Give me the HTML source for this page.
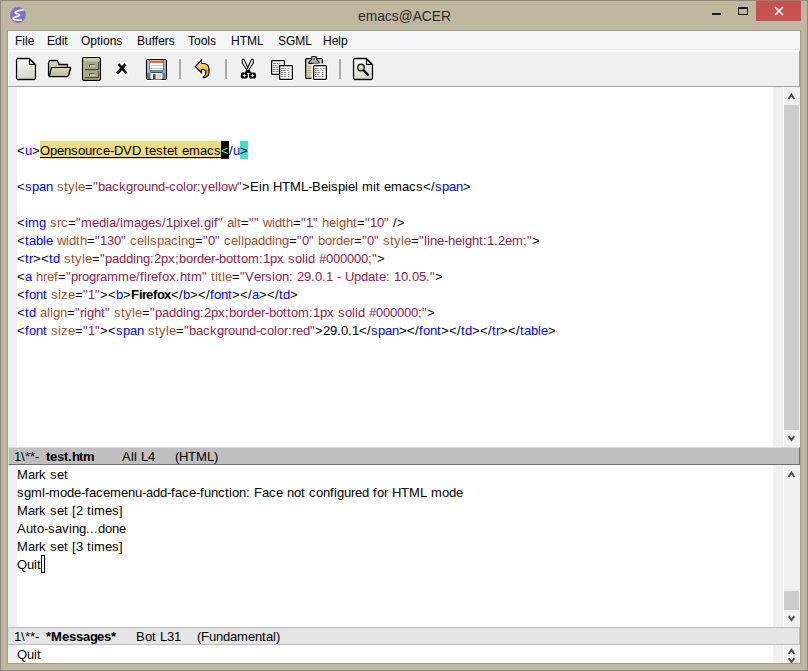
<!DOCTYPE html>
<html><head><meta charset="utf-8">
<style>
*{margin:0;padding:0;box-sizing:border-box}
html,body{width:808px;height:671px;overflow:hidden}
body{position:relative;background:#c0b7a0;font-family:"Liberation Sans",sans-serif;}
.abs{position:absolute}
.L,.M{position:absolute;left:17px;font-size:13px;line-height:18px;white-space:pre;color:#000;padding-top:1px;height:18px}
.M{line-height:18px}
.L i,.M i{display:inline-block;font-style:normal;text-align:left;overflow:visible}
.L b,.M b{font-weight:bold}
.t{color:#0000ff}
.a{color:#a0522d}
.s{color:#8b2252}
.cur{color:#40e0d0}
.mi{position:absolute;top:3px;font-size:12px;color:#000;line-height:15px}
.w3{width:3px}.w4{width:4px}.w5{width:5px}.w7{width:7px}.w8{width:8px}.w9{width:9px}.w10{width:10px}.w11{width:11px}
</style></head><body>
<div class="abs" style="left:0;top:0;width:808px;height:671px;border:1px solid #8e887a"></div>
<div class="abs" style="left:7px;top:30px;width:794px;height:634px;border:1px solid #a49c87"></div>
<!-- title bar -->
<svg class="abs" style="left:10px;top:7px" width="16" height="16" viewBox="0 0 16 16">
<circle cx="8" cy="8" r="7.9" fill="#7e70c4"/>
<path d="M13,2.8 C10,3.2 5.5,4 5.2,5.5 C5,7 10,7 9.8,8.2 C9.6,9.5 3,9.8 3,11.5 C3,13 8,13.2 11.5,13.2" stroke="#fff" stroke-width="1.7" fill="none" stroke-linecap="round" opacity="0.95"/>
</svg>
<div class="abs" style="left:358px;top:6px;width:110px;font-size:15.5px;color:#2b2b2b;line-height:20px;transform:scaleX(0.89);transform-origin:0 0;white-space:nowrap">emacs@ACER</div>
<div class="abs" style="left:712px;top:13px;width:9px;height:2px;background:#1e1e1e"></div>
<div class="abs" style="left:738px;top:7px;width:10px;height:8px;border:1px solid #1e1e1e;border-top-width:2px"></div>
<div class="abs" style="left:756px;top:1px;width:45px;height:20px;background:#c75050"></div>
<svg class="abs" style="left:773px;top:6px" width="12" height="10" viewBox="0 0 12 10"><path d="M2 1 L10 9 M10 1 L2 9" stroke="#fff" stroke-width="1.7"/></svg>

<!-- menu -->
<div class="abs" style="left:8px;top:31px;width:792px;height:18px;background:#f5f6f7">
<span class="mi" style="left:7px">File</span>
<span class="mi" style="left:39px">Edit</span>
<span class="mi" style="left:73px">Options</span>
<span class="mi" style="left:129px">Buffers</span>
<span class="mi" style="left:180px">Tools</span>
<span class="mi" style="left:223px">HTML</span>
<span class="mi" style="left:270px">SGML</span>
<span class="mi" style="left:315px">Help</span>
</div>
<div class="abs" style="left:8px;top:49px;width:792px;height:1px;background:#e6e7e9"></div>
<div class="abs" style="left:8px;top:50px;width:792px;height:36px;background:#f0f0f0;border-top:2px solid #fff;border-left:1px solid #fff;border-right:1px solid #a0a0a0"></div>
<div class="abs" style="left:8px;top:86px;width:792px;height:1px;background:#a0a0a0"></div>
<svg class="abs" style="left:0;top:0" width="400" height="88" viewBox="0 0 400 88">
<defs>
<linearGradient id="gdoc" x1="0" y1="0" x2="0.3" y2="1"><stop offset="0" stop-color="#ffffff"/><stop offset="1" stop-color="#d6d6d0"/></linearGradient>
<linearGradient id="gfold" x1="0" y1="0" x2="1" y2="1"><stop offset="0" stop-color="#c8c8c8"/><stop offset="1" stop-color="#ffffff"/></linearGradient>
<linearGradient id="gflap" x1="0" y1="0" x2="0" y2="1"><stop offset="0" stop-color="#dadac0"/><stop offset="1" stop-color="#babA94"/></linearGradient>
<linearGradient id="gfol" x1="0" y1="0" x2="0" y2="1"><stop offset="0" stop-color="#dedec4"/><stop offset="1" stop-color="#a8a884"/></linearGradient>
<linearGradient id="gund" x1="0" y1="0" x2="0" y2="1"><stop offset="0" stop-color="#fdf0b0"/><stop offset="0.45" stop-color="#f0c850"/><stop offset="0.6" stop-color="#d8a020"/><stop offset="1" stop-color="#f4d060"/></linearGradient>
<linearGradient id="gclip" x1="0" y1="0" x2="0" y2="1"><stop offset="0" stop-color="#e8e8e0"/><stop offset="1" stop-color="#909890"/></linearGradient>
<radialGradient id="glens" cx="0.4" cy="0.4" r="0.6"><stop offset="0" stop-color="#f4f4e8"/><stop offset="1" stop-color="#b8b8a0"/></radialGradient>
</defs>
<!-- separators -->
<rect x="179" y="59" width="2" height="20" fill="#a9a9a9"/>
<rect x="225" y="59" width="2" height="20" fill="#a9a9a9"/>
<rect x="339" y="59" width="2" height="20" fill="#a9a9a9"/>

<!-- new document -->
<g id="doc">
<path d="M16.5,59.5 L17.5,58.5 L29.5,58.5 L35.5,64.5 L35.5,78.5 L34.5,79.5 L17.5,79.5 L16.5,78.5 Z" fill="url(#gdoc)" stroke="#fff" stroke-width="3" stroke-linejoin="round"/>
<path d="M16.5,59.5 L17.5,58.5 L29.5,58.5 L35.5,64.5 L35.5,78.5 L34.5,79.5 L17.5,79.5 L16.5,78.5 Z" fill="url(#gdoc)" stroke="#000" stroke-width="1.3"/>
<path d="M29.5,59 L29.5,64.5 L35,64.5 Z" fill="url(#gfold)" stroke="#000" stroke-width="1.1"/>
</g>

<!-- folder -->
<path d="M48.5,63 L49.5,61 L50.5,60.5 L57,60.5 L58.5,63 L59,64.5 L67.5,64.5 L67.5,67.5 L70.5,67.5 L70.5,69 L68.5,75.5 L67.5,76.5 L49.5,76.5 L48.5,75.5 Z" fill="url(#gfol)" stroke="#fff" stroke-width="3" stroke-linejoin="round"/>
<path d="M48.5,63 L49.5,61 L50.5,60.5 L57,60.5 L58.5,63 L59,64.5 L67.5,64.5 L67.5,67.5 L70.5,67.5 L70.5,69 L68.5,75.5 L67.5,76.5 L49.5,76.5 L48.5,75.5 Z" fill="url(#gfol)" stroke="#000" stroke-width="1.3"/>
<path d="M51.5,67.5 L70.5,67.5 L68.5,75.5 L67.5,76.5 L49.5,76.5 L50.5,71 Z" fill="url(#gflap)" stroke="#000" stroke-width="1.2"/>

<!-- cabinet -->
<path d="M82.5,58 L83.5,57.5 L99.5,57.5 L100.5,58.5 L100.5,79.5 L99.5,80.5 L83.5,80.5 L82.5,79.5 Z" fill="#c2c29e" stroke="#fff" stroke-width="3"/>
<path d="M82.5,58 L83.5,57.5 L99.5,57.5 L100.5,58.5 L100.5,79.5 L99.5,80.5 L83.5,80.5 L82.5,79.5 Z" fill="#b4b490" stroke="#000" stroke-width="1.2"/>
<rect x="84" y="58" width="15" height="3" fill="#cacaa6"/>
<rect x="85" y="62" width="14" height="7" fill="#a8a884"/>
<rect x="85" y="69" width="14" height="1.3" fill="#3e4c4c"/>
<rect x="98" y="62" width="1.2" height="7" fill="#3e4c4c"/>
<rect x="89" y="64" width="6" height="3" fill="#c8c8a8"/><path d="M89.5,67 L89.5,64.5 L94.5,64.5" fill="none" stroke="#50584c" stroke-width="1"/>
<rect x="85" y="71" width="14" height="6" fill="#a8a884"/>
<rect x="85" y="77" width="14" height="1.3" fill="#505848"/>
<rect x="98" y="71" width="1.2" height="6" fill="#704838"/>
<rect x="89" y="73" width="6" height="3" fill="#c8c8a8"/><path d="M89.5,76 L89.5,73.5 L94.5,73.5" fill="none" stroke="#50584c" stroke-width="1"/><rect x="84" y="78" width="15" height="2" fill="#8e8e70"/>

<!-- X -->
<path d="M118.5,64 L126.5,73.5" stroke="#fff" stroke-width="4.5" stroke-linecap="round"/>
<path d="M125.5,64 L117,73.5" stroke="#fff" stroke-width="5" stroke-linecap="round"/>
<path d="M118.5,64 L126.5,73.5" stroke="#000" stroke-width="2.6"/>
<path d="M125.5,64.2 L117,73.5" stroke="#000" stroke-width="3"/>

<!-- floppy -->
<path d="M146.5,60 L147.5,59.5 L165.5,59.5 L166.5,60.5 L166.5,78.5 L165.5,79.5 L147.5,79.5 L146.5,78.5 Z" fill="#7f9fb8" stroke="#fff" stroke-width="3"/>
<path d="M146.5,60 L147.5,59.5 L165.5,59.5 L166.5,60.5 L166.5,78.5 L165.5,79.5 L147.5,79.5 L146.5,78.5 Z" fill="#7898aa" stroke="#000" stroke-width="1.2"/>
<rect x="147" y="60" width="2" height="19" fill="#a4c0d4"/>
<rect x="164" y="60" width="1.5" height="19" fill="#9cb8cc"/>
<rect x="147" y="73" width="3.5" height="6" fill="#5a74a8"/>
<rect x="161.5" y="73" width="3.5" height="6" fill="#5a74a8"/>
<rect x="150" y="60" width="14" height="11" fill="#6a7a80"/>
<rect x="150" y="60" width="13" height="10" fill="#ffffff"/>
<rect x="150" y="60" width="13" height="1" fill="#f0c070"/>
<rect x="150" y="61" width="13" height="2" fill="#e06048"/>
<rect x="150" y="65" width="13" height="1" fill="#c8c8c8"/>
<rect x="150" y="68" width="13" height="1" fill="#c8c8c8"/>
<rect x="150.5" y="72" width="12" height="7.5" rx="1.5" fill="#f2f2ea"/>
<rect x="151" y="72" width="11" height="1" fill="#3c4850"/>
<rect x="153" y="74" width="2.5" height="5" fill="#3e4a40"/>
<rect x="157" y="74" width="4" height="5" fill="#d4d4cc"/>

<!-- undo -->
<path d="M195.3,66.5 L201.5,60.2 L201.5,63.5 L204,63.5 C207,64 209,66.5 209,69.5 L209,72.5 C209,75 207,77 203.8,77.8 L203.2,77 C205.2,75.5 205.8,74 205.8,72.5 C205.8,70.5 204.3,69.5 202.5,69.5 L201.5,69.5 L201.5,72.8 Z" fill="url(#gund)" stroke="#fff" stroke-width="3" stroke-linejoin="round"/>
<path d="M195.3,66.5 L201.5,60.2 L201.5,63.5 L204,63.5 C207,64 209,66.5 209,69.5 L209,72.5 C209,75 207,77 203.8,77.8 L203.2,77 C205.2,75.5 205.8,74 205.8,72.5 C205.8,70.5 204.3,69.5 202.5,69.5 L201.5,69.5 L201.5,72.8 Z" fill="url(#gund)" stroke="#000" stroke-width="1.2" stroke-linejoin="miter"/>

<!-- scissors -->
<g stroke-linejoin="round">
<path d="M242.8,59 L244,59.3 L249,70.5 L247.5,71.2 L242.2,63 L242.3,60 Z" fill="#fff" stroke="#fff" stroke-width="3"/>
<path d="M252.7,59 L251.5,59.3 L246.5,70.5 L248,71.2 L253.3,63 L253.2,60 Z" fill="#fff" stroke="#fff" stroke-width="3"/>
<circle cx="244.3" cy="75.5" r="3.4" fill="#fff" stroke="#fff" stroke-width="2.5"/>
<circle cx="252.6" cy="75.5" r="3.4" fill="#fff" stroke="#fff" stroke-width="2.5"/>
<path d="M242.8,59 L244,59.3 L249,70.5 L247.5,71.2 L242.2,63 L242.3,60 Z" fill="#fff" stroke="#000" stroke-width="1.1"/>
<path d="M252.7,59 L251.5,59.3 L246.5,70.5 L248,71.2 L253.3,63 L253.2,60 Z" fill="#fff" stroke="#000" stroke-width="1.1"/>
<path d="M246,70 L250,70 L251,73 L245,73 Z" fill="#000"/>
<path d="M242,72.5 L246.5,72.5 L247.8,74 L247.8,77.2 L246.5,78.6 L242,78.6 L240.8,77.2 L240.8,74 Z" fill="#000"/><path d="M244.3,73.6 L244.9,75 L246.3,75.6 L244.9,76.2 L244.3,77.6 L243.7,76.2 L242.3,75.6 L243.7,75 Z" fill="#fff"/>
<path d="M250.3,72.5 L254.8,72.5 L256.1,74 L256.1,77.2 L254.8,78.6 L250.3,78.6 L249,77.2 L249,74 Z" fill="#000"/><path d="M252.6,73.6 L253.2,75 L254.6,75.6 L253.2,76.2 L252.6,77.6 L252,76.2 L250.6,75.6 L252,75 Z" fill="#fff"/>
<path d="M244.3,73.8 L244.7,75.1 L246,75.5 L244.7,75.9 L244.3,77.2 L243.9,75.9 L242.6,75.5 L243.9,75.1 Z" fill="#000" opacity="0.0"/>
</g>

<!-- copy -->
<rect x="271.5" y="60.5" width="13" height="14" fill="#fff" stroke="#fff" stroke-width="3"/>
<rect x="279.5" y="65.5" width="13" height="14" fill="#fff" stroke="#fff" stroke-width="3"/>
<rect x="271.6" y="60.6" width="12.8" height="13.8" rx="0.6" fill="#fff" stroke="#000" stroke-width="1.3"/>
<g fill="#8a8a86"><rect x="273" y="63" width="3.5" height="1"/><rect x="277" y="63" width="1.5" height="1"/><rect x="279" y="63" width="1.5" height="1"/>
<rect x="273" y="65" width="1.5" height="1"/><rect x="275" y="65" width="2.5" height="1"/>
<rect x="273" y="67" width="2.5" height="1"/><rect x="276" y="67" width="2.5" height="1"/>
<rect x="273" y="69" width="2.5" height="1"/><rect x="276" y="69" width="2.5" height="1"/>
<rect x="273" y="71" width="2.5" height="1"/><rect x="276" y="71" width="2.5" height="1"/></g>
<rect x="279.6" y="65.6" width="12.8" height="13.8" rx="0.6" fill="#fff" stroke="#000" stroke-width="1.3"/>
<g fill="#8a8a86"><rect x="281" y="68" width="3.5" height="1"/><rect x="285" y="68" width="1.5" height="1"/><rect x="288" y="68" width="1.5" height="1"/>
<rect x="281" y="70" width="1.5" height="1"/><rect x="283" y="70" width="2.5" height="1"/><rect x="287" y="70" width="1.5" height="1"/>
<rect x="281" y="72" width="2.5" height="1"/><rect x="284" y="72" width="2.5" height="1"/><rect x="288" y="72" width="1.5" height="1"/>
<rect x="281" y="74" width="2.5" height="1"/><rect x="284" y="74" width="2.5" height="1"/><rect x="288" y="74" width="1.5" height="1"/>
<rect x="281" y="76" width="2.5" height="1"/><rect x="284" y="76" width="2.5" height="1"/><rect x="288" y="76" width="1.5" height="1"/></g>

<!-- paste -->
<rect x="305.5" y="58.5" width="17" height="20" rx="1" fill="#fff" stroke="#fff" stroke-width="3"/>
<rect x="305.6" y="58.6" width="16.8" height="19.8" rx="1" fill="#d8d6b4" stroke="#000" stroke-width="1.3"/>
<rect x="321" y="59" width="1" height="19" fill="#c87838"/>
<g fill="#b8b08e"><rect x="307" y="66" width="14" height="1"/><rect x="307" y="68" width="14" height="1"/><rect x="307" y="70" width="14" height="1"/><rect x="307" y="72" width="14" height="1"/><rect x="307" y="74" width="14" height="1"/><rect x="307" y="76" width="14" height="1"/></g>
<path d="M312,56.5 L316,56.5 L316.5,59.5 L319,62 L319,63.5 L309,63.5 L309,62 L311.5,59.5 Z" fill="url(#gclip)" stroke="#000" stroke-width="1.1" stroke-linejoin="round"/><rect x="313" y="58" width="2" height="2" fill="#606860"/>
<rect x="313" y="65" width="14" height="15" rx="1" fill="#fff" stroke="#fff" stroke-width="3"/>
<rect x="313.6" y="65.6" width="12.8" height="13.8" rx="1" fill="#fff" stroke="#000" stroke-width="1.3"/>
<g fill="#8a8a86"><rect x="315" y="68" width="3.5" height="1"/><rect x="320" y="68" width="1.5" height="1"/><rect x="323" y="68" width="1.5" height="1"/>
<rect x="315" y="70" width="1.5" height="1"/><rect x="317" y="70" width="2.5" height="1"/><rect x="322" y="70" width="1.5" height="1"/>
<rect x="315" y="72" width="2.5" height="1"/><rect x="318" y="72" width="2.5" height="1"/><rect x="322" y="72" width="1.5" height="1"/>
<rect x="315" y="74" width="1.5" height="1"/><rect x="317" y="74" width="2.5" height="1"/><rect x="322" y="74" width="1.5" height="1"/>
<rect x="315" y="76" width="2.5" height="1"/><rect x="318" y="76" width="2.5" height="1"/><rect x="322" y="76" width="1.5" height="1"/></g>

<!-- search document -->
<g transform="translate(337,0)">
<path d="M16.5,59.5 L17.5,58.5 L29.5,58.5 L35.5,64.5 L35.5,78.5 L34.5,79.5 L17.5,79.5 L16.5,78.5 Z" fill="url(#gdoc)" stroke="#fff" stroke-width="3" stroke-linejoin="round"/>
<path d="M16.5,59.5 L17.5,58.5 L29.5,58.5 L35.5,64.5 L35.5,78.5 L34.5,79.5 L17.5,79.5 L16.5,78.5 Z" fill="url(#gdoc)" stroke="#000" stroke-width="1.3"/>
<path d="M29.5,59 L29.5,64.5 L35,64.5 Z" fill="url(#gfold)" stroke="#000" stroke-width="1.1"/>
</g>
<circle cx="361" cy="67.5" r="3.3" fill="url(#glens)" stroke="#1c2420" stroke-width="1.4"/>
<path d="M363.8,70.5 L368,74.8" stroke="#000" stroke-width="2.2" stroke-linecap="round"/>
</svg>


<!-- editor window -->
<div class="abs" style="left:8px;top:87px;width:792px;height:360px;background:#fff"></div>
<div class="abs" style="left:8px;top:87px;width:9px;height:360px;background:#f0f0f0"></div>
<div class="abs" style="left:773px;top:87px;width:10px;height:360px;background:#f0f0f0"></div>
<div class="abs" style="left:784px;top:87px;width:16px;height:360px;background:#f0f0f0"></div>
<div class="abs" style="left:784px;top:105px;width:15px;height:325px;background:#cdcdcd"></div>
<!-- mode line 1 -->
<div class="abs" style="left:8px;top:447px;width:792px;height:18px;background:#bfbfbf;border-top:1px solid #dadada;border-left:1px solid #dcdcdc;border-bottom:1px solid #6f6f6f;border-right:1px solid #6f6f6f"></div>
<!-- messages window -->
<div class="abs" style="left:8px;top:465px;width:792px;height:162px;background:#fff"></div>
<div class="abs" style="left:8px;top:465px;width:9px;height:162px;background:#f0f0f0"></div>
<div class="abs" style="left:773px;top:465px;width:10px;height:162px;background:#f0f0f0"></div>
<div class="abs" style="left:784px;top:465px;width:16px;height:162px;background:#f0f0f0"></div>
<div class="abs" style="left:784px;top:591px;width:15px;height:19px;background:#cdcdcd"></div>
<!-- mode line 2 -->
<div class="abs" style="left:8px;top:627px;width:792px;height:18px;background:#e5e5e5;border:1px solid #bdbdbd;border-left-color:#dcdcdc"></div>
<!-- echo -->
<div class="abs" style="left:8px;top:645px;width:792px;height:18px;background:#fff"></div>
<div class="abs" style="left:8px;top:645px;width:9px;height:18px;background:#f0f0f0"></div>
<div class="abs" style="left:773px;top:645px;width:10px;height:18px;background:#f0f0f0"></div>
<div class="abs" style="left:784px;top:645px;width:16px;height:18px;background:#f0f0f0"></div>
<svg class="abs" style="left:784px;top:87px" width="16" height="576" viewBox="784 87 16 576">
<g fill="none" stroke="#505050" stroke-width="2">
<path d="M788.7,99 L791.5,94.6 L794.3,99"/>
<path d="M788.7,436.2 L791.5,440 L794.3,436.2"/>
<path d="M788.7,477 L791.5,472.6 L794.3,477"/>
<path d="M788.7,616.2 L791.5,620 L794.3,616.2"/>
<path d="M788.7,654 L791.5,649.8 L794.3,654"/>
<path d="M788.7,658.2 L791.5,662 L794.3,658.2"/>
</g>
</svg>

<div class="abs" style="left:40px;top:141px;width:181px;height:18px;background:#eedc82"></div><div class="abs" style="left:221px;top:141px;width:8px;height:18px;background:#000"></div><div class="abs" style="left:240px;top:141px;width:8px;height:18px;background:#40e0d0"></div><div class="abs" style="left:40px;top:157px;width:181px;height:1px;background:#000"></div><div class="L" style="top:141px"><i class="w8">&lt;</i><span class="t"><i class="w7">u</i></span><i class="w8">&gt;</i><i class="w10">O</i><i class="w7">p</i><i class="w7">e</i><i class="w7">n</i><i class="w7">s</i><i class="w7">o</i><i class="w7">u</i><i class="w4">r</i><i class="w7">c</i><i class="w7">e</i><i class="w4">-</i><i class="w9">D</i><i class="w9">V</i><i class="w9">D</i><i class="w4"> </i><i class="w4">t</i><i class="w7">e</i><i class="w7">s</i><i class="w4">t</i><i class="w7">e</i><i class="w4">t</i><i class="w4"> </i><i class="w7">e</i><i class="w11">m</i><i class="w7">a</i><i class="w7">c</i><i class="w7">s</i><span class="cur"><i class="w8">&lt;</i></span><i class="w4">/</i><span class="t"><i class="w7">u</i></span><i class="w8">&gt;</i></div>
<div class="L" style="top:177px"><i class="w8">&lt;</i><span class="t"><i class="w7">s</i><i class="w7">p</i><i class="w7">a</i><i class="w7">n</i></span><i class="w4"> </i><span class="a"><i class="w7">s</i><i class="w4">t</i><i class="w7">y</i><i class="w3">l</i><i class="w7">e</i></span><i class="w8">=</i><span class="s"><i class="w5">"</i><i class="w7">b</i><i class="w7">a</i><i class="w7">c</i><i class="w7">k</i><i class="w7">g</i><i class="w4">r</i><i class="w7">o</i><i class="w7">u</i><i class="w7">n</i><i class="w7">d</i><i class="w4">-</i><i class="w7">c</i><i class="w7">o</i><i class="w3">l</i><i class="w7">o</i><i class="w4">r</i><i class="w4">:</i><i class="w7">y</i><i class="w7">e</i><i class="w3">l</i><i class="w3">l</i><i class="w7">o</i><i class="w9">w</i><i class="w5">"</i></span><i class="w8">&gt;</i><i class="w9">E</i><i class="w3">i</i><i class="w7">n</i><i class="w4"> </i><i class="w9">H</i><i class="w8">T</i><i class="w11">M</i><i class="w7">L</i><i class="w4">-</i><i class="w9">B</i><i class="w7">e</i><i class="w3">i</i><i class="w7">s</i><i class="w7">p</i><i class="w3">i</i><i class="w7">e</i><i class="w3">l</i><i class="w4"> </i><i class="w11">m</i><i class="w3">i</i><i class="w4">t</i><i class="w4"> </i><i class="w7">e</i><i class="w11">m</i><i class="w7">a</i><i class="w7">c</i><i class="w7">s</i><i class="w8">&lt;</i><i class="w4">/</i><span class="t"><i class="w7">s</i><i class="w7">p</i><i class="w7">a</i><i class="w7">n</i></span><i class="w8">&gt;</i></div>
<div class="L" style="top:213px"><i class="w8">&lt;</i><span class="t"><i class="w3">i</i><i class="w11">m</i><i class="w7">g</i></span><i class="w4"> </i><span class="a"><i class="w7">s</i><i class="w4">r</i><i class="w7">c</i></span><i class="w8">=</i><span class="s"><i class="w5">"</i><i class="w11">m</i><i class="w7">e</i><i class="w7">d</i><i class="w3">i</i><i class="w7">a</i><i class="w4">/</i><i class="w3">i</i><i class="w11">m</i><i class="w7">a</i><i class="w7">g</i><i class="w7">e</i><i class="w7">s</i><i class="w4">/</i><i class="w7">1</i><i class="w7">p</i><i class="w3">i</i><i class="w7">x</i><i class="w7">e</i><i class="w3">l</i><i class="w4">.</i><i class="w7">g</i><i class="w3">i</i><i class="w4">f</i><i class="w5">"</i></span><i class="w4"> </i><span class="a"><i class="w7">a</i><i class="w3">l</i><i class="w4">t</i></span><i class="w8">=</i><span class="s"><i class="w5">"</i><i class="w5">"</i></span><i class="w4"> </i><span class="a"><i class="w9">w</i><i class="w3">i</i><i class="w7">d</i><i class="w4">t</i><i class="w7">h</i></span><i class="w8">=</i><span class="s"><i class="w5">"</i><i class="w7">1</i><i class="w5">"</i></span><i class="w4"> </i><span class="a"><i class="w7">h</i><i class="w7">e</i><i class="w3">i</i><i class="w7">g</i><i class="w7">h</i><i class="w4">t</i></span><i class="w8">=</i><span class="s"><i class="w5">"</i><i class="w7">1</i><i class="w7">0</i><i class="w5">"</i></span><i class="w4"> </i><i class="w4">/</i><i class="w8">&gt;</i></div>
<div class="L" style="top:231px"><i class="w8">&lt;</i><span class="t"><i class="w4">t</i><i class="w7">a</i><i class="w7">b</i><i class="w3">l</i><i class="w7">e</i></span><i class="w4"> </i><span class="a"><i class="w9">w</i><i class="w3">i</i><i class="w7">d</i><i class="w4">t</i><i class="w7">h</i></span><i class="w8">=</i><span class="s"><i class="w5">"</i><i class="w7">1</i><i class="w7">3</i><i class="w7">0</i><i class="w5">"</i></span><i class="w4"> </i><span class="a"><i class="w7">c</i><i class="w7">e</i><i class="w3">l</i><i class="w3">l</i><i class="w7">s</i><i class="w7">p</i><i class="w7">a</i><i class="w7">c</i><i class="w3">i</i><i class="w7">n</i><i class="w7">g</i></span><i class="w8">=</i><span class="s"><i class="w5">"</i><i class="w7">0</i><i class="w5">"</i></span><i class="w4"> </i><span class="a"><i class="w7">c</i><i class="w7">e</i><i class="w3">l</i><i class="w3">l</i><i class="w7">p</i><i class="w7">a</i><i class="w7">d</i><i class="w7">d</i><i class="w3">i</i><i class="w7">n</i><i class="w7">g</i></span><i class="w8">=</i><span class="s"><i class="w5">"</i><i class="w7">0</i><i class="w5">"</i></span><i class="w4"> </i><span class="a"><i class="w7">b</i><i class="w7">o</i><i class="w4">r</i><i class="w7">d</i><i class="w7">e</i><i class="w4">r</i></span><i class="w8">=</i><span class="s"><i class="w5">"</i><i class="w7">0</i><i class="w5">"</i></span><i class="w4"> </i><span class="a"><i class="w7">s</i><i class="w4">t</i><i class="w7">y</i><i class="w3">l</i><i class="w7">e</i></span><i class="w8">=</i><span class="s"><i class="w5">"</i><i class="w3">l</i><i class="w3">i</i><i class="w7">n</i><i class="w7">e</i><i class="w4">-</i><i class="w7">h</i><i class="w7">e</i><i class="w3">i</i><i class="w7">g</i><i class="w7">h</i><i class="w4">t</i><i class="w4">:</i><i class="w7">1</i><i class="w4">.</i><i class="w7">2</i><i class="w7">e</i><i class="w11">m</i><i class="w4">;</i><i class="w5">"</i></span><i class="w8">&gt;</i></div>
<div class="L" style="top:249px"><i class="w8">&lt;</i><span class="t"><i class="w4">t</i><i class="w4">r</i></span><i class="w8">&gt;</i><i class="w8">&lt;</i><span class="t"><i class="w4">t</i><i class="w7">d</i></span><i class="w4"> </i><span class="a"><i class="w7">s</i><i class="w4">t</i><i class="w7">y</i><i class="w3">l</i><i class="w7">e</i></span><i class="w8">=</i><span class="s"><i class="w5">"</i><i class="w7">p</i><i class="w7">a</i><i class="w7">d</i><i class="w7">d</i><i class="w3">i</i><i class="w7">n</i><i class="w7">g</i><i class="w4">:</i><i class="w7">2</i><i class="w7">p</i><i class="w7">x</i><i class="w4">;</i><i class="w7">b</i><i class="w7">o</i><i class="w4">r</i><i class="w7">d</i><i class="w7">e</i><i class="w4">r</i><i class="w4">-</i><i class="w7">b</i><i class="w7">o</i><i class="w4">t</i><i class="w4">t</i><i class="w7">o</i><i class="w11">m</i><i class="w4">:</i><i class="w7">1</i><i class="w7">p</i><i class="w7">x</i><i class="w4"> </i><i class="w7">s</i><i class="w7">o</i><i class="w3">l</i><i class="w3">i</i><i class="w7">d</i><i class="w4"> </i><i class="w7">#</i><i class="w7">0</i><i class="w7">0</i><i class="w7">0</i><i class="w7">0</i><i class="w7">0</i><i class="w7">0</i><i class="w4">;</i><i class="w5">"</i></span><i class="w8">&gt;</i></div>
<div class="L" style="top:267px"><i class="w8">&lt;</i><span class="t"><i class="w7">a</i></span><i class="w4"> </i><span class="a"><i class="w7">h</i><i class="w4">r</i><i class="w7">e</i><i class="w4">f</i></span><i class="w8">=</i><span class="s"><i class="w5">"</i><i class="w7">p</i><i class="w4">r</i><i class="w7">o</i><i class="w7">g</i><i class="w4">r</i><i class="w7">a</i><i class="w11">m</i><i class="w11">m</i><i class="w7">e</i><i class="w4">/</i><i class="w4">f</i><i class="w3">i</i><i class="w4">r</i><i class="w7">e</i><i class="w4">f</i><i class="w7">o</i><i class="w7">x</i><i class="w4">.</i><i class="w7">h</i><i class="w4">t</i><i class="w11">m</i><i class="w5">"</i></span><i class="w4"> </i><span class="a"><i class="w4">t</i><i class="w3">i</i><i class="w4">t</i><i class="w3">l</i><i class="w7">e</i></span><i class="w8">=</i><span class="s"><i class="w5">"</i><i class="w9">V</i><i class="w7">e</i><i class="w4">r</i><i class="w7">s</i><i class="w3">i</i><i class="w7">o</i><i class="w7">n</i><i class="w4">:</i><i class="w4"> </i><i class="w7">2</i><i class="w7">9</i><i class="w4">.</i><i class="w7">0</i><i class="w4">.</i><i class="w7">1</i><i class="w4"> </i><i class="w4">-</i><i class="w4"> </i><i class="w9">U</i><i class="w7">p</i><i class="w7">d</i><i class="w7">a</i><i class="w4">t</i><i class="w7">e</i><i class="w4">:</i><i class="w4"> </i><i class="w7">1</i><i class="w7">0</i><i class="w4">.</i><i class="w7">0</i><i class="w7">5</i><i class="w4">.</i><i class="w5">"</i></span><i class="w8">&gt;</i></div>
<div class="L" style="top:285px"><i class="w8">&lt;</i><span class="t"><i class="w4">f</i><i class="w7">o</i><i class="w7">n</i><i class="w4">t</i></span><i class="w4"> </i><span class="a"><i class="w7">s</i><i class="w3">i</i><i class="w7">z</i><i class="w7">e</i></span><i class="w8">=</i><span class="s"><i class="w5">"</i><i class="w7">1</i><i class="w5">"</i></span><i class="w8">&gt;</i><i class="w8">&lt;</i><span class="t"><i class="w7">b</i></span><i class="w8">&gt;</i><b><i class="w8">F</i><i class="w3">i</i><i class="w4">r</i><i class="w7">e</i><i class="w4">f</i><i class="w7">o</i><i class="w7">x</i></b><i class="w8">&lt;</i><i class="w4">/</i><span class="t"><i class="w7">b</i></span><i class="w8">&gt;</i><i class="w8">&lt;</i><i class="w4">/</i><span class="t"><i class="w4">f</i><i class="w7">o</i><i class="w7">n</i><i class="w4">t</i></span><i class="w8">&gt;</i><i class="w8">&lt;</i><i class="w4">/</i><span class="t"><i class="w7">a</i></span><i class="w8">&gt;</i><i class="w8">&lt;</i><i class="w4">/</i><span class="t"><i class="w4">t</i><i class="w7">d</i></span><i class="w8">&gt;</i></div>
<div class="L" style="top:303px"><i class="w8">&lt;</i><span class="t"><i class="w4">t</i><i class="w7">d</i></span><i class="w4"> </i><span class="a"><i class="w7">a</i><i class="w3">l</i><i class="w3">i</i><i class="w7">g</i><i class="w7">n</i></span><i class="w8">=</i><span class="s"><i class="w5">"</i><i class="w4">r</i><i class="w3">i</i><i class="w7">g</i><i class="w7">h</i><i class="w4">t</i><i class="w5">"</i></span><i class="w4"> </i><span class="a"><i class="w7">s</i><i class="w4">t</i><i class="w7">y</i><i class="w3">l</i><i class="w7">e</i></span><i class="w8">=</i><span class="s"><i class="w5">"</i><i class="w7">p</i><i class="w7">a</i><i class="w7">d</i><i class="w7">d</i><i class="w3">i</i><i class="w7">n</i><i class="w7">g</i><i class="w4">:</i><i class="w7">2</i><i class="w7">p</i><i class="w7">x</i><i class="w4">;</i><i class="w7">b</i><i class="w7">o</i><i class="w4">r</i><i class="w7">d</i><i class="w7">e</i><i class="w4">r</i><i class="w4">-</i><i class="w7">b</i><i class="w7">o</i><i class="w4">t</i><i class="w4">t</i><i class="w7">o</i><i class="w11">m</i><i class="w4">:</i><i class="w7">1</i><i class="w7">p</i><i class="w7">x</i><i class="w4"> </i><i class="w7">s</i><i class="w7">o</i><i class="w3">l</i><i class="w3">i</i><i class="w7">d</i><i class="w4"> </i><i class="w7">#</i><i class="w7">0</i><i class="w7">0</i><i class="w7">0</i><i class="w7">0</i><i class="w7">0</i><i class="w7">0</i><i class="w4">;</i><i class="w5">"</i></span><i class="w8">&gt;</i></div>
<div class="L" style="top:321px"><i class="w8">&lt;</i><span class="t"><i class="w4">f</i><i class="w7">o</i><i class="w7">n</i><i class="w4">t</i></span><i class="w4"> </i><span class="a"><i class="w7">s</i><i class="w3">i</i><i class="w7">z</i><i class="w7">e</i></span><i class="w8">=</i><span class="s"><i class="w5">"</i><i class="w7">1</i><i class="w5">"</i></span><i class="w8">&gt;</i><i class="w8">&lt;</i><span class="t"><i class="w7">s</i><i class="w7">p</i><i class="w7">a</i><i class="w7">n</i></span><i class="w4"> </i><span class="a"><i class="w7">s</i><i class="w4">t</i><i class="w7">y</i><i class="w3">l</i><i class="w7">e</i></span><i class="w8">=</i><span class="s"><i class="w5">"</i><i class="w7">b</i><i class="w7">a</i><i class="w7">c</i><i class="w7">k</i><i class="w7">g</i><i class="w4">r</i><i class="w7">o</i><i class="w7">u</i><i class="w7">n</i><i class="w7">d</i><i class="w4">-</i><i class="w7">c</i><i class="w7">o</i><i class="w3">l</i><i class="w7">o</i><i class="w4">r</i><i class="w4">:</i><i class="w4">r</i><i class="w7">e</i><i class="w7">d</i><i class="w5">"</i></span><i class="w8">&gt;</i><i class="w7">2</i><i class="w7">9</i><i class="w4">.</i><i class="w7">0</i><i class="w4">.</i><i class="w7">1</i><i class="w8">&lt;</i><i class="w4">/</i><span class="t"><i class="w7">s</i><i class="w7">p</i><i class="w7">a</i><i class="w7">n</i></span><i class="w8">&gt;</i><i class="w8">&lt;</i><i class="w4">/</i><span class="t"><i class="w4">f</i><i class="w7">o</i><i class="w7">n</i><i class="w4">t</i></span><i class="w8">&gt;</i><i class="w8">&lt;</i><i class="w4">/</i><span class="t"><i class="w4">t</i><i class="w7">d</i></span><i class="w8">&gt;</i><i class="w8">&lt;</i><i class="w4">/</i><span class="t"><i class="w4">t</i><i class="w4">r</i></span><i class="w8">&gt;</i><i class="w8">&lt;</i><i class="w4">/</i><span class="t"><i class="w4">t</i><i class="w7">a</i><i class="w7">b</i><i class="w3">l</i><i class="w7">e</i></span><i class="w8">&gt;</i></div>
<div class="L" style="top:465px"><i class="w11">M</i><i class="w7">a</i><i class="w4">r</i><i class="w7">k</i><i class="w4"> </i><i class="w7">s</i><i class="w7">e</i><i class="w4">t</i></div>
<div class="L" style="top:483px"><i class="w7">s</i><i class="w7">g</i><i class="w11">m</i><i class="w3">l</i><i class="w4">-</i><i class="w11">m</i><i class="w7">o</i><i class="w7">d</i><i class="w7">e</i><i class="w4">-</i><i class="w4">f</i><i class="w7">a</i><i class="w7">c</i><i class="w7">e</i><i class="w11">m</i><i class="w7">e</i><i class="w7">n</i><i class="w7">u</i><i class="w4">-</i><i class="w7">a</i><i class="w7">d</i><i class="w7">d</i><i class="w4">-</i><i class="w4">f</i><i class="w7">a</i><i class="w7">c</i><i class="w7">e</i><i class="w4">-</i><i class="w4">f</i><i class="w7">u</i><i class="w7">n</i><i class="w7">c</i><i class="w4">t</i><i class="w3">i</i><i class="w7">o</i><i class="w7">n</i><i class="w4">:</i><i class="w4"> </i><i class="w8">F</i><i class="w7">a</i><i class="w7">c</i><i class="w7">e</i><i class="w4"> </i><i class="w7">n</i><i class="w7">o</i><i class="w4">t</i><i class="w4"> </i><i class="w7">c</i><i class="w7">o</i><i class="w7">n</i><i class="w4">f</i><i class="w3">i</i><i class="w7">g</i><i class="w7">u</i><i class="w4">r</i><i class="w7">e</i><i class="w7">d</i><i class="w4"> </i><i class="w4">f</i><i class="w7">o</i><i class="w4">r</i><i class="w4"> </i><i class="w9">H</i><i class="w8">T</i><i class="w11">M</i><i class="w7">L</i><i class="w4"> </i><i class="w11">m</i><i class="w7">o</i><i class="w7">d</i><i class="w7">e</i></div>
<div class="L" style="top:501px"><i class="w11">M</i><i class="w7">a</i><i class="w4">r</i><i class="w7">k</i><i class="w4"> </i><i class="w7">s</i><i class="w7">e</i><i class="w4">t</i><i class="w4"> </i><i class="w4">[</i><i class="w7">2</i><i class="w4"> </i><i class="w4">t</i><i class="w3">i</i><i class="w11">m</i><i class="w7">e</i><i class="w7">s</i><i class="w4">]</i></div>
<div class="L" style="top:519px"><i class="w9">A</i><i class="w7">u</i><i class="w4">t</i><i class="w7">o</i><i class="w4">-</i><i class="w7">s</i><i class="w7">a</i><i class="w7">v</i><i class="w3">i</i><i class="w7">n</i><i class="w7">g</i><i class="w4">.</i><i class="w4">.</i><i class="w4">.</i><i class="w7">d</i><i class="w7">o</i><i class="w7">n</i><i class="w7">e</i></div>
<div class="L" style="top:537px"><i class="w11">M</i><i class="w7">a</i><i class="w4">r</i><i class="w7">k</i><i class="w4"> </i><i class="w7">s</i><i class="w7">e</i><i class="w4">t</i><i class="w4"> </i><i class="w4">[</i><i class="w7">3</i><i class="w4"> </i><i class="w4">t</i><i class="w3">i</i><i class="w11">m</i><i class="w7">e</i><i class="w7">s</i><i class="w4">]</i></div>
<div class="L" style="top:555px"><i class="w10">Q</i><i class="w7">u</i><i class="w3">i</i><i class="w4">t</i></div>
<div class="abs" style="left:41px;top:555px;width:4px;height:18px;border:1px solid #000"></div>
<div class="L" style="top:645px"><i class="w10">Q</i><i class="w7">u</i><i class="w3">i</i><i class="w4">t</i></div>
<div class="M" style="left:14px;top:447px"><i class="w7">1</i><i class="w4">\</i><i class="w5">*</i><i class="w5">*</i><i class="w4">-</i></div><div class="M" style="left:46px;top:447px"><b><i class="w4">t</i><i class="w7">e</i><i class="w7">s</i><i class="w4">t</i><i class="w4">.</i><i class="w7">h</i><i class="w4">t</i><i class="w11">m</i></b></div><div class="M" style="left:122px;top:447px"><i class="w9">A</i><i class="w3">l</i><i class="w3">l</i><i class="w4"> </i><i class="w7">L</i><i class="w7">4</i></div><div class="M" style="left:175px;top:447px"><i class="w4">(</i><i class="w9">H</i><i class="w8">T</i><i class="w11">M</i><i class="w7">L</i><i class="w4">)</i></div>
<div class="M" style="left:14px;top:627px"><i class="w7">1</i><i class="w4">\</i><i class="w5">*</i><i class="w5">*</i><i class="w4">-</i></div><div class="M" style="left:46px;top:627px"><b><i class="w5">*</i><i class="w11">M</i><i class="w7">e</i><i class="w7">s</i><i class="w7">s</i><i class="w7">a</i><i class="w7">g</i><i class="w7">e</i><i class="w7">s</i><i class="w5">*</i></b></div><div class="M" style="left:136px;top:627px"><i class="w9">B</i><i class="w7">o</i><i class="w4">t</i><i class="w4"> </i><i class="w7">L</i><i class="w7">3</i><i class="w7">1</i></div><div class="M" style="left:197px;top:627px"><i class="w4">(</i><i class="w8">F</i><i class="w7">u</i><i class="w7">n</i><i class="w7">d</i><i class="w7">a</i><i class="w11">m</i><i class="w7">e</i><i class="w7">n</i><i class="w4">t</i><i class="w7">a</i><i class="w3">l</i><i class="w4">)</i></div>
</body></html>
